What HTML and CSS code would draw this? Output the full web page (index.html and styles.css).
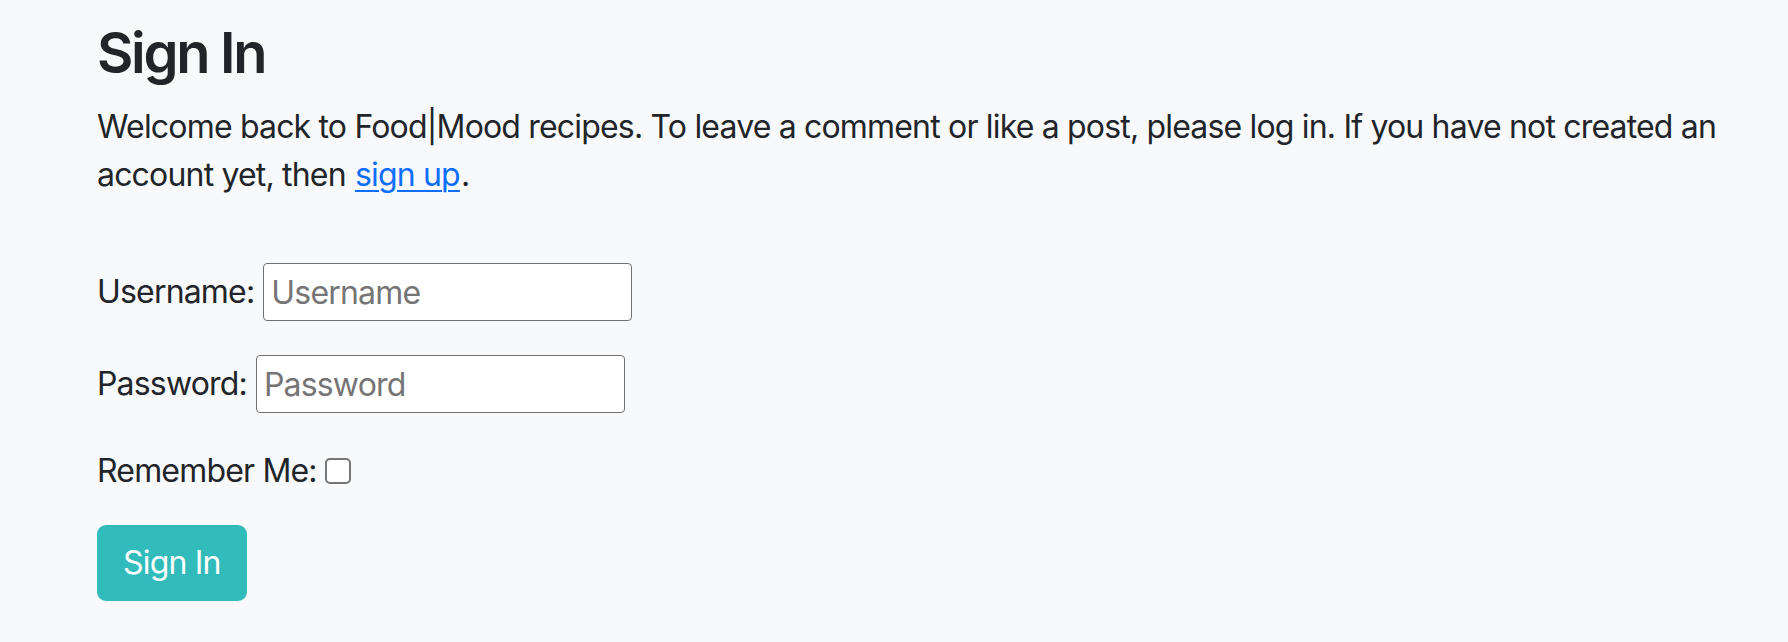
FILE: index.html
```html
<!DOCTYPE html>
<html lang="en">
<head>
<meta charset="utf-8">
<title>Sign In</title>
<link rel="stylesheet" href="styles.css">
</head>
<body>
<main class="container">
  <h1 class="title">Sign In</h1>
  <p class="intro"><span>Welcome back to Food|Mood recipes. To leave a comment or like a post, please log in. If you have not created an</span> <span>account yet, then</span> <a href="#" class="link">sign up</a><span>.</span></p>
  <form class="login">
    <p class="field"><label for="u">Username:</label><input id="u" class="text-input" type="text" placeholder="Username"></p>
    <p class="field"><label for="p">Password:</label><input id="p" class="text-input" type="password" placeholder="Password"></p>
    <p class="field field-check"><label for="r">Remember Me:</label><input id="r" class="check" type="checkbox"></p>
    <button type="submit" class="btn">Sign In</button>
  </form>
</main>
</body>
</html>
```

FILE: styles.css
```css
html, body {
  margin: 0;
  padding: 0;
  background: #f8f9fa;
}
body {
  font-family: Inter, "Noto Sans", sans-serif;
  color: #212529;
  font-size: 32px;
  line-height: 48px;
  letter-spacing: -0.82px;
}
.container {
  padding: 20px 40px 0 97px;
}
.title {
  margin: 0 0 16px;
  font-size: 56px;
  line-height: 67px;
  font-weight: 600;
  letter-spacing: -2.3px;
}
.intro {
  margin: 0 0 64px;
}
.link {
  margin: 0 1px;
  color: #0d6efd;
  text-decoration: underline;
  text-underline-offset: 4px;
  text-decoration-thickness: 2px;
}
.login {
  margin: 0;
}
.field {
  display: flex;
  align-items: center;
  gap: 9px;
  margin: 0 0 34px;
  min-height: 58px;
}
.field-check {
  min-height: 45px;
  gap: 8px;
  margin-bottom: 30px;
}
.text-input {
  box-sizing: border-box;
  width: 369px;
  height: 58px;
  margin: 0;
  padding: 0 7px;
  border: 1.5px solid #6f6f6f;
  border-radius: 4px;
  background: #fff;
  font-family: inherit;
  font-size: 32px;
  letter-spacing: -0.82px;
  color: #212529;
}
.text-input::placeholder {
  color: #757575;
}
.check {
  appearance: none;
  -webkit-appearance: none;
  box-sizing: border-box;
  width: 26px;
  height: 26px;
  margin: 0;
  border: 2px solid #767676;
  border-radius: 5px;
  background: #fff;
}
.btn {
  box-sizing: border-box;
  height: 76px;
  padding: 0 26px;
  border: 0;
  border-radius: 9px;
  background: #31bbbb;
  color: #fff;
  font-family: inherit;
  font-size: 32px;
  line-height: 48px;
  letter-spacing: -0.82px;
}
```
